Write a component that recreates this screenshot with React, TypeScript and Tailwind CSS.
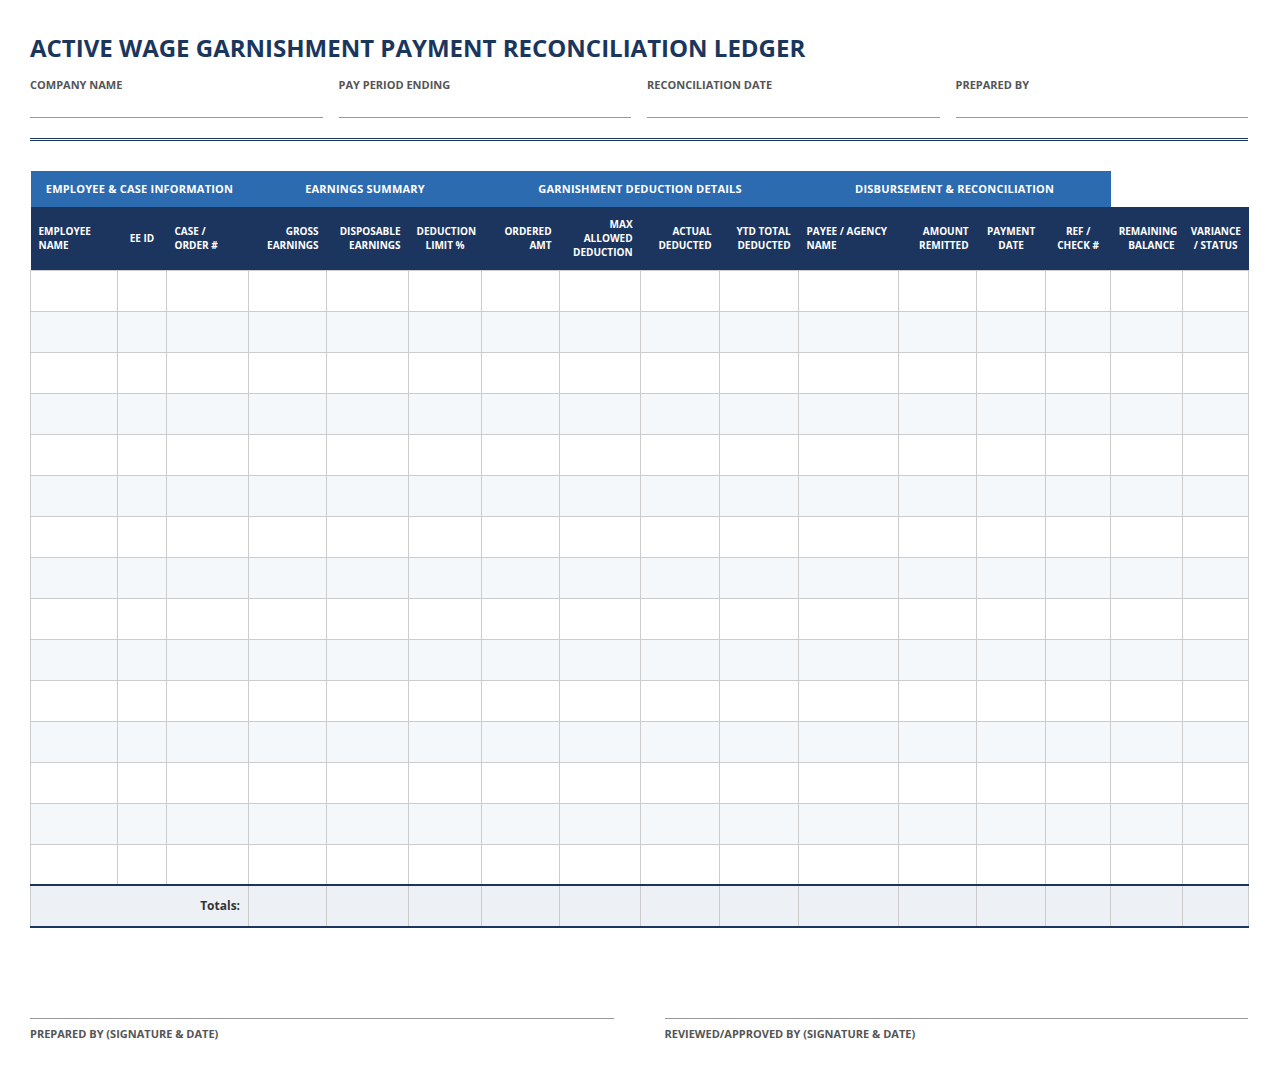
type Align = "left" | "center" | "right";

type Column = {
  lines: string[];
  width: number;
  align: Align;
};

const columns: Column[] = [
  { lines: ["EMPLOYEE", "NAME"], width: 87, align: "left" },
  { lines: ["EE ID"], width: 49, align: "center" },
  { lines: ["CASE /", "ORDER #"], width: 82, align: "left" },
  { lines: ["GROSS", "EARNINGS"], width: 78, align: "right" },
  { lines: ["DISPOSABLE", "EARNINGS"], width: 82, align: "right" },
  { lines: ["DEDUCTION", "LIMIT %"], width: 73, align: "center" },
  { lines: ["ORDERED", "AMT"], width: 78, align: "right" },
  { lines: ["MAX", "ALLOWED", "DEDUCTION"], width: 81, align: "right" },
  { lines: ["ACTUAL", "DEDUCTED"], width: 79, align: "right" },
  { lines: ["YTD TOTAL", "DEDUCTED"], width: 79, align: "right" },
  { lines: ["PAYEE / AGENCY", "NAME"], width: 100, align: "left" },
  { lines: ["AMOUNT", "REMITTED"], width: 78, align: "right" },
  { lines: ["PAYMENT", "DATE"], width: 69, align: "center" },
  { lines: ["REF /", "CHECK #"], width: 65, align: "center" },
  { lines: ["REMAINING", "BALANCE"], width: 72, align: "right" },
  { lines: ["VARIANCE", "/ STATUS"], width: 66, align: "center" },
];

const alignClass: Record<Align, string> = {
  left: "text-left",
  center: "text-center",
  right: "text-right",
};

const groups = [
  { label: "EMPLOYEE & CASE INFORMATION", span: 3 },
  { label: "EARNINGS SUMMARY", span: 3 },
  { label: "GARNISHMENT DEDUCTION DETAILS", span: 4 },
  { label: "DISBURSEMENT & RECONCILIATION", span: 4 },
];

const metaFields = ["COMPANY NAME", "PAY PERIOD ENDING", "RECONCILIATION DATE", "PREPARED BY"];

const ROWS = 15;

export default function App() {
  return (
    <div className="min-h-screen bg-white px-[30px] pt-8 font-['Open_Sans','Liberation_Sans',sans-serif]">
      <h1 className="text-[24px] font-bold leading-8 text-[#1b365d]">
        ACTIVE WAGE GARNISHMENT PAYMENT RECONCILIATION LEDGER
      </h1>

      <div className="mt-[13px] grid grid-cols-4 gap-4">
        {metaFields.map((f) => (
          <div key={f}>
            <div className="text-[11px] font-bold leading-4 text-[#555555]">{f}</div>
            <div className="h-[25px] border-b border-[#999999]" />
          </div>
        ))}
      </div>

      <div className="mt-5 border-b-[3px] border-double border-[#1c355e]" />

      <table className="mt-[30px] w-[1218px] table-fixed border-collapse">
        <colgroup>
          {columns.map((c, i) => (
            <col key={i} style={{ width: c.width }} />
          ))}
        </colgroup>
        <thead>
          <tr className="h-9">
            {groups.map((g) => (
              <th
                key={g.label}
                colSpan={g.span}
                className="bg-[#2c6bb0] text-center text-[11px] font-bold tracking-[0.02em] text-white"
              >
                {g.label}
              </th>
            ))}
            <th colSpan={2} />
          </tr>
          <tr className="h-[63px] bg-[#1c355e]">
            {columns.map((c, i) => (
              <th
                key={i}
                className={`px-2 align-middle text-[10px] font-bold leading-[14px] text-white ${alignClass[c.align]}`}
              >
                {c.lines.map((l) => (
                  <span key={l} className="block whitespace-nowrap">
                    {l}
                  </span>
                ))}
              </th>
            ))}
          </tr>
        </thead>
        <tbody>
          {Array.from({ length: ROWS }).map((_, r) => (
            <tr key={r} className={r % 2 === 1 ? "bg-[#f5f8fb]" : "bg-white"}>
              {columns.map((_, i) => (
                <td key={i} className="h-[41px] border border-[#cccccc]" />
              ))}
            </tr>
          ))}
          <tr className="bg-[#edf1f5]">
            <td
              colSpan={3}
              className="h-[42px] border-x border-y-2 border-x-[#cccccc] border-y-[#1c355e] px-2 text-right text-[12px] font-bold text-[#333333]"
            >
              Totals:
            </td>
            {columns.slice(3).map((_, i) => (
              <td
                key={i}
                className="border-x border-y-2 border-x-[#cccccc] border-y-[#1c355e]"
              />
            ))}
          </tr>
        </tbody>
      </table>

      <div className="mt-[90px] grid grid-cols-2 gap-[51px]">
        {["PREPARED BY (SIGNATURE & DATE)", "REVIEWED/APPROVED BY (SIGNATURE & DATE)"].map((s) => (
          <div key={s} className="border-t border-[#999999] pt-[7px]">
            <div className="text-[11px] font-bold leading-4 text-[#555555]">{s}</div>
          </div>
        ))}
      </div>
    </div>
  );
}
